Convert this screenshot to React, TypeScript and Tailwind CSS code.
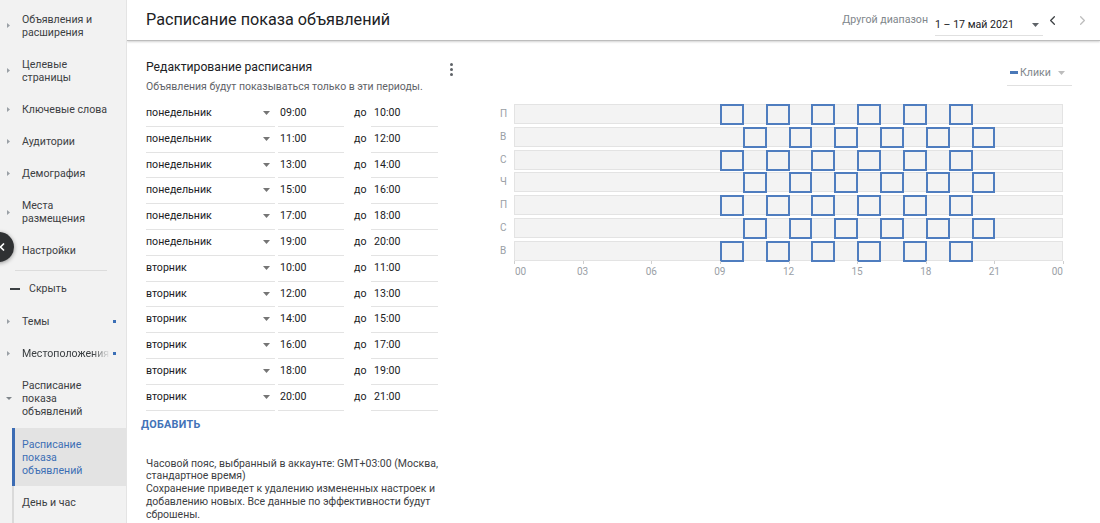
import { ChevronLeft, ChevronRight } from "lucide-react";

const Tri = ({ className = "" }: { className?: string }) => (
  <svg width="7" height="4" viewBox="0 0 7 4" className={className}>
    <path d="M0 0h7L3.5 4z" fill="currentColor" />
  </svg>
);

const Bullet = () => (
  <svg width="3" height="5" viewBox="0 0 3 5" className="text-[#9aa0a6]">
    <path d="M0 0l3 2.5L0 5z" fill="currentColor" />
  </svg>
);

const DownBullet = () => (
  <svg width="6" height="3" viewBox="0 0 6 3" className="text-[#80868b]">
    <path d="M0 0h6L3 3z" fill="currentColor" />
  </svg>
);

type NavProps = { lines: string[]; h: string; dot?: boolean; clip?: boolean };

function NavItem({ lines, h, dot, clip }: NavProps) {
  return (
    <div className={`flex items-center ${h} pl-[7px] pr-[10px]`}>
      <div className="w-[15px] flex items-center">
        <Bullet />
      </div>
      <div
        className={`flex-1 min-w-0 leading-[13px] text-[10.6px] text-[#3c4043] ${
          clip ? "whitespace-nowrap overflow-hidden [mask-image:linear-gradient(to_right,black_80%,transparent)]" : ""
        }`}
      >
        {lines.map((l) => (
          <div key={l}>{l}</div>
        ))}
      </div>
      {dot && <div className="w-[3px] h-[3px] bg-[#3b6fb6] ml-[3px]" />}
    </div>
  );
}

function Sidebar() {
  return (
    <div className="relative w-[127px] shrink-0 h-full bg-[#f2f2f2] border-r border-[#e4e4e4] pt-[3px]">
      <NavItem h="h-[45px]" lines={["Объявления и", "расширения"]} />
      <NavItem h="h-[45px]" lines={["Целевые", "страницы"]} />
      <NavItem h="h-[32px]" lines={["Ключевые слова"]} />
      <NavItem h="h-[32px]" lines={["Аудитории"]} />
      <NavItem h="h-[32px]" lines={["Демография"]} />
      <NavItem h="h-[46px]" lines={["Места", "размещения"]} />
      <div className="flex items-center h-[32px] pl-[22px] text-[10.6px] text-[#3c4043]">Настройки</div>
      <div className="h-[4px] ml-[15px] mr-[19px] border-b border-[#dcdcdc]" />
      <div className="flex items-center h-[34px] pt-[2px] pl-[10px]">
        <div className="w-[10px] h-[2px] bg-[#3c4043]" />
        <span className="ml-[9px] text-[10.6px] text-[#3c4043]">Скрыть</span>
      </div>
      <NavItem h="h-[32px]" lines={["Темы"]} dot />
      <NavItem h="h-[32px]" lines={["Местоположения"]} dot clip />
      <div className="flex items-center h-[58px] pl-[6px]">
        <div className="w-[16px] flex items-center">
          <DownBullet />
        </div>
        <div className="leading-[13px] text-[10.6px] text-[#3c4043]">
          <div>Расписание</div>
          <div>показа</div>
          <div>объявлений</div>
        </div>
      </div>
      <div className="ml-[12px] h-[58px] flex items-center bg-[#e3e3e3] border-l-[3px] border-[#3c6cb4] pl-[7px] mt-[1px]">
        <div className="leading-[13px] text-[10.6px] text-[#3d6fb5]">
          <div>Расписание</div>
          <div>показа</div>
          <div>объявлений</div>
        </div>
      </div>
      <div className="ml-[12px] h-[40px] flex items-start pt-[9px] border-l-2 border-[#dadada] pl-[8px] text-[10.6px] text-[#3c4043]">
        День и час
      </div>
      <div className="absolute left-[-16px] top-[232px] w-[30px] h-[30px] rounded-full bg-[#2f3133] shadow-[0_1px_4px_rgba(0,0,0,0.4)] flex items-center justify-end pr-[6px]">
        <ChevronLeft size={12} strokeWidth={3.5} className="text-white" />
      </div>
    </div>
  );
}

function Header() {
  return (
    <div className="h-[41px] shrink-0 flex items-center justify-between pl-[19px] pr-[10.5px] border-b border-[#bdbdbd] shadow-[0_1px_2px_rgba(0,0,0,0.18)] bg-white">
      <div className="text-[16.2px] text-[#202124] mt-[1px]">Расписание показа объявлений</div>
      <div className="flex items-center">
        <span className="text-[10.6px] text-[#80868b]">Другой диапазон</span>
        <div className="ml-[7px] w-[108px] h-[22px] flex items-center justify-between border-b border-[#e0e0e0] mt-[10px] pb-[10px]">
          <span className="text-[10.6px] text-[#202124] mt-[10px]">1 – 17 май 2021</span>
          <Tri className="text-[#5f6368] mt-[10px] mr-[4px]" />
        </div>
        <ChevronLeft size={15} strokeWidth={2} className="ml-[1.5px] text-[#3c4043]" />
        <ChevronRight size={15} strokeWidth={2} className="ml-[15px] text-[#bdbdbd]" />
      </div>
    </div>
  );
}

type Row = { day: string; from: string; to: string };
const rows: Row[] = [
  { day: "понедельник", from: "09:00", to: "10:00" },
  { day: "понедельник", from: "11:00", to: "12:00" },
  { day: "понедельник", from: "13:00", to: "14:00" },
  { day: "понедельник", from: "15:00", to: "16:00" },
  { day: "понедельник", from: "17:00", to: "18:00" },
  { day: "понедельник", from: "19:00", to: "20:00" },
  { day: "вторник", from: "10:00", to: "11:00" },
  { day: "вторник", from: "12:00", to: "13:00" },
  { day: "вторник", from: "14:00", to: "15:00" },
  { day: "вторник", from: "16:00", to: "17:00" },
  { day: "вторник", from: "18:00", to: "19:00" },
  { day: "вторник", from: "20:00", to: "21:00" },
];

function Editor() {
  return (
    <div className="w-[338px] shrink-0 pl-[19px] pr-[12px] pt-[18px]">
      <div className="flex items-center justify-between h-[16px]">
        <span className="text-[12.2px] text-[#202124]">Редактирование расписания</span>
        <div className="flex flex-col gap-[2px] mt-[4px]">
          <div className="w-[3px] h-[3px] rounded-full bg-[#5f6368]" />
          <div className="w-[3px] h-[3px] rounded-full bg-[#5f6368]" />
          <div className="w-[3px] h-[3px] rounded-full bg-[#5f6368]" />
        </div>
      </div>
      <div className="mt-[5px] text-[10.5px] leading-[13px] text-[#5f6368]">
        Объявления будут показываться только в эти периоды.
      </div>
      <div className="mt-[8px] flex flex-col">
        {rows.map((r, i) => (
          <div key={i} className="flex h-[25.8px] text-[10.6px] text-[#202124]">
            <div className="w-[129px] flex justify-between border-b border-[#e3e3e3] pt-[5px] leading-[13px]">
              <span>{r.day}</span>
              <Tri className="text-[#757575] mt-[5px] mr-[5px]" />
            </div>
            <div className="w-[66px] ml-[3px] border-b border-[#e3e3e3] pt-[5px] pl-[2px] leading-[13px]">{r.from}</div>
            <div className="w-[27px] pl-[10px] pt-[5px] leading-[13px]">до</div>
            <div className="w-[67px] border-b border-[#e3e3e3] pt-[5px] pl-[3px] leading-[13px]">{r.to}</div>
          </div>
        ))}
      </div>
      <div className="-ml-[5px] mt-[7px] text-[10.8px] leading-[14px] font-bold text-[#4273b8] tracking-[0.3px]">ДОБАВИТЬ</div>
      <div className="mt-[26px] w-[300px] text-[10.5px] leading-[12.8px] text-[#3c4043]">
        Часовой пояс, выбранный в аккаунте: GMT+03:00 (Москва, стандартное время)
        <br />
        Сохранение приведет к удалению измененных настроек и добавлению новых. Все данные по эффективности будут сброшены.
      </div>
    </div>
  );
}

const HOUR = 549 / 24;
const mon = [9, 11, 13, 15, 17, 19];
const tue = [10, 12, 14, 16, 18, 20];
const days = [
  { l: "П", h: mon },
  { l: "В", h: tue },
  { l: "С", h: mon },
  { l: "Ч", h: tue },
  { l: "П", h: mon },
  { l: "С", h: tue },
  { l: "В", h: mon },
];
const ticks = ["00", "03", "06", "09", "12", "15", "18", "21", "00"];

function Chart() {
  return (
    <div className="flex-1 pt-[19px]">
      <div className="flex justify-end pr-[28px]">
        <div className="w-[65px] h-[26px] flex items-center border-b border-[#e0e0e0] pl-[3px]">
          <div className="w-[8px] h-[3px] bg-[#4a78b8]" />
          <span className="ml-[2px] text-[10.6px] text-[#80868b]">Клики</span>
          <Tri className="ml-[7px] text-[#bdbdbd]" />
        </div>
      </div>
      <div className="mt-[18px] pl-[35px]">
        <div className="flex flex-col gap-[2.8px]">
          {days.map((d, i) => (
            <div key={i} className="flex items-center h-[20px]">
              <span className="w-[14px] text-[10px] text-[#9aa0a6] leading-[12px]">{d.l}</span>
              <div className="relative w-[549px] h-full bg-[#f3f3f3] border border-[#e3e3e3]">
                {d.h.map((h) => (
                  <div
                    key={h}
                    className="absolute top-[-1px] h-[21px] border-2 border-[#4f7dbf]"
                    style={{ left: h * HOUR - 1, width: HOUR + 1 }}
                  />
                ))}
              </div>
            </div>
          ))}
        </div>
        <div className="relative ml-[14px] w-[549px] h-[18px]">
          {ticks.map((t, i) => (
            <div key={i}>
              <div className="absolute top-0 w-px h-[3px] bg-[#cfcfcf]" style={{ left: i * HOUR * 3 }} />
              <span
                className="absolute top-[5px] text-[10px] leading-[12px] text-[#9aa0a6]"
                style={{
                  left: i * HOUR * 3,
                  transform: i === 0 ? "translateX(1px)" : i === 8 ? "translateX(-100%)" : "translateX(-50%)",
                }}
              >
                {t}
              </span>
            </div>
          ))}
        </div>
      </div>
    </div>
  );
}

export default function App() {
  return (
    <div className="flex w-[1100px] h-[523px] overflow-hidden bg-white font-['Roboto','Noto_Sans',sans-serif]">
      <Sidebar />
      <div className="flex-1 flex flex-col min-w-0">
        <Header />
        <div className="flex flex-1">
          <Editor />
          <Chart />
        </div>
      </div>
    </div>
  );
}
